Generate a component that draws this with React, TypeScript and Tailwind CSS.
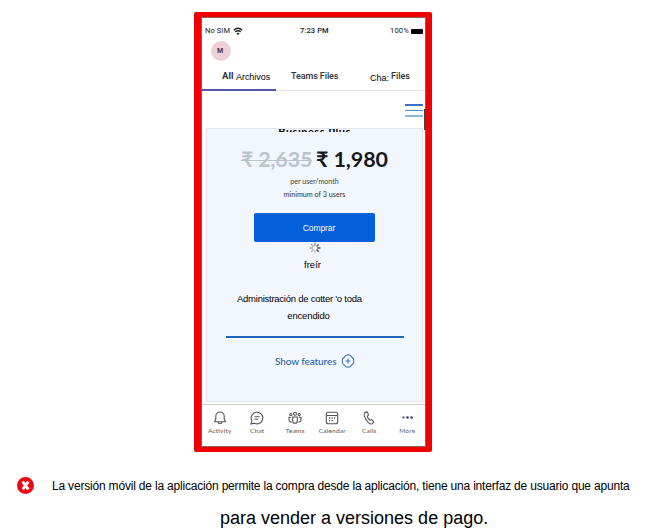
import React from "react";

function Wifi() {
  return (
    <svg width="10" height="9" viewBox="0 0 10 9" fill="none" stroke="#222" strokeWidth="1.4">
      <path d="M.8 3.2Q5-.6 9.2 3.2M2.3 5Q5 2.6 7.7 5" />
      <path d="M3.4 6.3Q5 5 6.6 6.3L5 8.2Z" fill="#222" stroke="none" />
    </svg>
  );
}

function Spinner() {
  const shades = ["#888", "#666", "#333", "#444", "#bbb", "#aaa", "#999", "#999"];
  return (
    <svg width="12" height="12" viewBox="-6 -6 12 12">
      {shades.map((c, i) => (
        <line key={i} x1="0" y1="-2.2" x2="0" y2="-5.4" stroke={c} strokeWidth="1.3" transform={`rotate(${i * 45})`} />
      ))}
    </svg>
  );
}

const icons: Record<string, React.ReactNode> = {
  Activity: (
    <>
      <path d="M1.5 10.8 2.8 8.2V5.2a4.2 4.2 0 0 1 8.4 0v3l1.3 2.6Z" />
      <path d="M5.2 11a1.8 1.8 0 0 0 3.6 0" />
    </>
  ),
  Chat: (
    <>
      <path d="M1 13 1.8 9.6A5.8 5.8 0 1 1 4.4 12.2Z" />
      <path d="M4.5 5.8h5.2M4.5 8.2h3.6" />
    </>
  ),
  Teams: (
    <>
      <circle cx="7" cy="2.8" r="1.5" />
      <circle cx="2.8" cy="3.6" r="1.1" />
      <circle cx="11.2" cy="3.6" r="1.1" />
      <path d="M4.7 6h4.6v4a2.3 2.3 0 0 1-4.6 0ZM3.2 6.2H1v2.6a2.2 2.2 0 0 0 2.6 2.1M10.8 6.2H13v2.6a2.2 2.2 0 0 1-2.6 2.1" />
    </>
  ),
  Calendar: (
    <>
      <rect x="1.3" y="1.3" width="11.4" height="11.4" rx="2" />
      <path d="M1.5 4.5h11" />
      <path d="M4 7h1.2M6.5 7h1.2M9 7h1.2M4 9.6h1.2M6.5 9.6h1.2" strokeWidth="1.3" />
    </>
  ),
  Calls: (
    <path d="M3 1.4 5.2.9 6.5 3.8 5.3 5.3C5.7 7 6.6 8.3 8 9.2L9.8 8.7 11.7 10.8 10.5 12.6C9 13.6 6.6 12.2 4.8 9.7 2.6 6.8 1.5 3 3 1.4Z" />
  ),
  More: (
    <g fill="#3b3a78" stroke="none">
      <circle cx="3.5" cy="6.5" r="1.1" />
      <circle cx="7.5" cy="6.5" r="1.3" />
      <circle cx="11.5" cy="6.5" r="1.3" />
    </g>
  ),
};

function NavItem({ name, className }: { name: string; className: string }) {
  return (
    <div className={`flex flex-col items-center ${className}`}>
      <svg width="14" height="14" viewBox="0 0 14 14" fill="none" stroke="#555" strokeWidth="1.1">
        {icons[name]}
      </svg>
      <span className={`mt-[2px] whitespace-nowrap text-[6.5px] leading-[7px] tracking-[0.2px] ${name === "More" ? "text-[#66668c]" : "text-[#555]"}`}>
        {name}
      </span>
    </div>
  );
}

export default function App() {
  return (
    <div className="h-[530px] w-[658px] overflow-hidden bg-white pt-[12px] font-['Liberation_Sans',Arial,sans-serif] text-black">
      <div className="ml-[194px] h-[440px] w-[238px] rounded-[2px] border-t-[5px] border-r-[6px] border-b-[5px] border-l-[7px] border-[#f00000]">
        <div className="relative flex h-[430px] w-[225px] flex-col overflow-hidden bg-white whitespace-nowrap">
          <div className="flex h-[28px] shrink-0 items-center pl-[4px] font-['Roboto',sans-serif] text-[7.5px] text-[#222]">
            <span className="w-[28px] tracking-[0.1px]">No SIM</span>
            <Wifi />
            <span className="ml-[57px] w-[90px] font-medium tracking-[0.1px]">7:23 PM</span>
            <span className="w-[21px] tracking-[0.2px]">100%</span>
            <span className="h-[5px] w-[12px] rounded-[1px] bg-black" />
          </div>
          <div className="ml-[10px] mt-[-4px] flex size-[20px] shrink-0 items-center justify-center rounded-full bg-[#ecd2d6] pr-[2px] text-[7.5px] font-bold text-[#4c2932]">M</div>
          <div className="flex h-[30px] shrink-0 items-center border-b border-[#e5e5e5] font-['Roboto',sans-serif] text-[9px] text-[#333]">
            <div className="flex h-[30px] w-[75px] items-center border-b-2 border-[#5558a6] pt-[4px] pl-[21px]">
              <span className="w-[14px] text-[9.5px] font-bold">All</span>
              <span className="pt-[2px] font-['Liberation_Sans',Arial,sans-serif] text-[9px] tracking-[-0.05px] text-black">Archivos</span>
            </div>
            <span className="ml-[15px] w-[79px] pt-[3px] font-medium tracking-[-0.1px]">Teams Files</span>
            <span className="w-[21px] pt-[6px] font-['Liberation_Sans',Arial,sans-serif] text-black">Cha:</span>
            <span className="pt-[3px] font-medium">Files</span>
          </div>
          <div className="flex h-[37px] shrink-0 items-start justify-end">
            <div className="mt-[13px] mr-[3px] flex w-[18px] flex-col gap-[4px]">
              <span className="h-[1.5px] bg-[#3b70c4]" />
              <span className="h-[1.5px] bg-[#4b90cf]" />
              <span className="h-[1.5px] bg-[#8bb9dd]" />
            </div>
          </div>
          <div className="ml-[5px] flex h-[274px] w-[217px] shrink-0 flex-col items-center overflow-hidden border border-[#e2e5ea] bg-[#f2f7fe] font-['Lato',sans-serif]">
            <div className="flex h-[3px] w-full shrink-0 items-end justify-center overflow-hidden text-[11px] font-bold leading-[0px] tracking-[0.5px]">Business Plus</div>
            <div className="mt-[13px] flex h-[28px] w-full shrink-0 items-center pl-[34px] text-[21.5px] font-bold">
              <span className="w-[75px] tracking-[-0.2px] text-[#b9c5cd]"><span className="line-through decoration-1">₹ 2,635</span></span>
              <span className="tracking-[-0.1px] text-[#15191e]">₹ 1,980</span>
            </div>
            <div className="mt-[2px] h-[13px] shrink-0 text-[7.1px] leading-[13px] text-[#444]">per user/month</div>
            <div className="h-[13px] shrink-0 text-[7.2px] leading-[13px] text-[#333]">minimum of 3 users</div>
            <div className="mt-[12px] flex h-[29px] w-[121px] shrink-0 items-center justify-center rounded-[2px] bg-[#0360d9] pt-[2px] pl-[9px] font-['Liberation_Sans',Arial,sans-serif] text-[8.5px] tracking-[-0.1px] text-white">Comprar</div>
            <div className="h-[12px] shrink-0"><Spinner /></div>
            <div className="mt-[4px] h-[14px] shrink-0 pr-[4px] font-['Liberation_Sans',Arial,sans-serif] text-[9.5px] leading-[14px]">freír</div>
            <div className="mt-[20px] h-[14px] w-full shrink-0 pl-[30px] font-['Liberation_Sans',Arial,sans-serif] text-[9.5px] leading-[14px] tracking-[-0.25px]">Administración de cotter 'o toda</div>
            <div className="mt-[3px] h-[14px] shrink-0 pr-[12px] font-['Liberation_Sans',Arial,sans-serif] text-[9.5px] leading-[14px] tracking-[-0.15px]">encendido</div>
            <div className="mt-[13px] h-[2px] w-[178px] shrink-0 bg-[#1e66b9]" />
            <div className="mt-[16px] flex h-[14px] w-full shrink-0 items-center pl-[68px] text-[10px] font-medium tracking-[-0.1px] text-[#2865ae]">
              <span className="w-[66px]">Show features</span>
              <svg width="14" height="14" viewBox="0 0 14 14" fill="none" stroke="#4779b4" strokeWidth="1.1">
                <path d="M5 1.4 7 .7 9.2 1.3 12.7 5v4L9.3 12.6 7 13.3 4.7 12.6 1.4 9V5Z" strokeLinejoin="round" />
                <path d="M4.5 7h5M7 4.5v5" />
              </svg>
            </div>
          </div>
          <div className="mt-[2px] flex h-[43px] shrink-0 border-t border-[#cfcfcf] pt-[6px] font-['Lato',sans-serif]">
            <NavItem name="Activity" className="w-[38px]" />
            <NavItem name="Chat" className="w-[38px]" />
            <NavItem name="Teams" className="w-[39px]" />
            <NavItem name="Calendar" className="w-[36px]" />
            <NavItem name="Calls" className="w-[39px]" />
            <NavItem name="More" className="w-[38px]" />
          </div>
          <div className="pointer-events-none absolute inset-0 border border-[#8a5e5e]" />
          <div className="absolute top-[92px] right-0 h-[21px] w-[2px] bg-[#444]" />
        </div>
      </div>
      <div className="mt-[24px] flex h-[18px] items-center pl-[17px]">
        <svg width="17" height="17" viewBox="0 0 17 17">
          <circle cx="8.5" cy="8.5" r="8.5" fill="#ee0711" />
          <path d="m5.7 4.7 5.6 7.6M11.3 4.7l-5.6 7.6" stroke="white" strokeWidth="2.8" />
        </svg>
        <span className="ml-[18px] pt-[3px] text-[12px] leading-[15px] tracking-[-0.19px] whitespace-nowrap">La versión móvil de la aplicación permite la compra desde la aplicación, tiene una interfaz de usuario que apunta</span>
      </div>
      <div className="mt-[13px] pl-[220px] text-[18px] leading-[22px] whitespace-nowrap">para vender a versiones de pago.</div>
    </div>
  );
}
